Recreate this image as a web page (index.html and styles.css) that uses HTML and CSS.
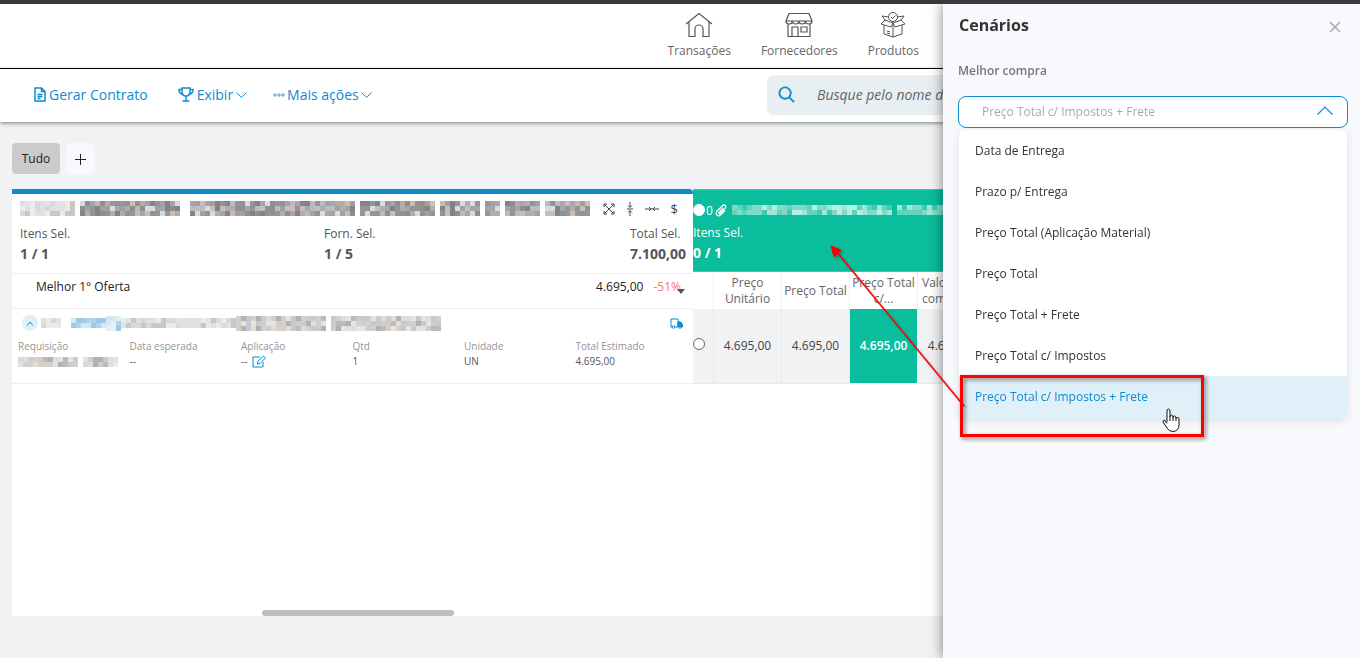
FILE: index.html
```html
<!DOCTYPE html>
<html lang="pt-BR">
<head>
<meta charset="utf-8">
<title>Cenários</title>
<link rel="stylesheet" href="styles.css">
</head>
<body>
<div class="page">
  <header class="topbar">
    <nav class="main-nav">
      <a href="#" class="nav-item">
        <svg width="28" height="26" viewBox="0 0 28 26" class="line-icon"><path d="M1 12 14 1.500 27 12M4 10v14.500h6V17a4 4 0 0 1 8 0v7.500h6V10"/></svg>
        <span>Transações</span>
      </a>
      <a href="#" class="nav-item">
        <svg width="28" height="26" viewBox="0 0 28 26" class="line-icon"><path d="M4 1.500h20l3 7.500H1zM1 9q0 3 3.200 3t3.300-3q0 3 3.200 3t3.300-3q0 3 3.200 3t3.300-3q0 3 3.200 3T27 9M3 12v12.500h22V12M7 24V15h6v9.500M16 15h6v5h-6z"/></svg>
        <span>Fornecedores</span>
      </a>
      <a href="#" class="nav-item">
        <svg width="26" height="26" viewBox="0 0 26 26" class="line-icon thin"><circle cx="13" cy="5" r="4.500"/><path d="m11 5 1.500 1.500 3-3M9 5 2 4l3 4-4 4 10 3 2-4 2 4 10-3-4-4 3-4-7 1M5 8l8 3 8-3M4 13v9l9 3 9-3v-9M13 11v14M7 19l3 1M7 21l3 1"/></svg>
        <span>Produtos</span>
      </a>
    </nav>
  </header>

  <div class="toolbar">
    <button class="tool tool-contract">
      <svg width="12" height="15" viewBox="0 0 12 15"><path d="M1 1h6.500L11 4.500V14H1zM7.500 1v3.500H11M3.500 7.500h5M3.500 9.500h5M3.500 11.500h3"/></svg>
      Gerar Contrato
    </button>
    <button class="tool tool-show">
      <svg width="16" height="15" viewBox="0 0 16 15"><path d="M4 1h8v3.500Q12 9 8 9T4 4.500zM4 2.500H1Q1 7 5.500 7.500M12 2.500h3Q15 7 10.500 7.500M8 9v4.500M4.500 14h7"/></svg>
      Exibir
      <svg class="chev" width="11" height="6" viewBox="0 0 11 6"><path d="m0.500 0.500 5 5 5-5"/></svg>
    </button>
    <button class="tool tool-more">
      <svg class="chev dots" width="12" height="4" viewBox="0 0 12 4"><circle cx="2" cy="2" r="1.200"/><circle cx="6" cy="2" r="1.200"/><circle cx="10" cy="2" r="1.200"/></svg>
      Mais ações
      <svg class="chev" width="11" height="6" viewBox="0 0 11 6"><path d="m0.500 0.500 5 5 5-5"/></svg>
    </button>
    <label class="search">
      <svg width="17" height="17" viewBox="0 0 18 18"><circle cx="7.500" cy="7.500" r="6"/><path d="m12 12 5 5"/></svg>
      <input type="text" aria-label="Busca" placeholder="Busque pelo nome do">
    </label>
  </div>

  <main class="content">
    <div class="tabs">
      <button class="tab tab-active">Tudo</button>
      <button class="tab tab-add" aria-label="Adicionar"><svg width="11" height="11" viewBox="0 0 11 11"><path d="M5.500 0v11M0 5.500h11"/></svg></button>
    </div>

    <div class="board">
      <section class="items">
        <div class="summary">
          <div class="title-row">
            <div class="mosaic" data-rows="3" data-runs="l11 g1 d20 g2 d33 g1 d15 g1 d8 g1 d3 g1 d7 g1 d9"></div>
            <div class="title-actions">
              <button class="ico" aria-label="Expandir"><svg width="12" height="12" viewBox="0 0 12 12"><path d="m1 1 10 10M11 1 1 11M1 4V1h3M8 1h3v3M11 8v3H8M4 11H1V8"/></svg></button>
              <button class="ico" aria-label="Comprimir linhas"><svg width="6" height="14" viewBox="0 0 6 14"><path d="M3 0v5M3 9v5M0 7h6M1 3.500l2 2 2-2M1 10.500l2-2 2 2"/></svg></button>
              <button class="ico" aria-label="Comprimir colunas"><svg width="14" height="6" viewBox="0 0 14 6"><path d="M0 3h5M9 3h5M4 1l2 2-2 2M10 1 8 3l2 2M5 3h4"/></svg></button>
              <button class="ico dollar">$</button>
            </div>
          </div>
          <dl class="totals">
            <div><dt>Itens Sel.</dt><dd>1 / 1</dd></div>
            <div><dt>Forn. Sel.</dt><dd>1 / 5</dd></div>
            <div class="totals-last"><dt>Total Sel.</dt><dd>7.100,00</dd></div>
          </dl>
        </div>
        <div class="offer">
          <span>Melhor 1° Oferta</span>
          <span class="offer-value">4.695,00</span>
          <span class="offer-diff">-51%</span>
          <svg class="caret" width="8" height="5" viewBox="0 0 8 5"><path d="M0 0h8L4 5z"/></svg>
        </div>
        <article class="item">
          <div class="item-head">
            <button class="collapse" aria-label="Recolher"><svg width="8" height="5" viewBox="0 0 8 5"><path d="M1 4.500 4 1l3 3.500"/></svg></button>
            <div class="mosaic-line">
              <div class="mosaic" data-rows="2" data-runs="l4 g2 b7"></div>
              <div class="mosaic" data-rows="3" data-runs="b3"></div>
              <div class="mosaic" data-rows="2" data-runs="l23"></div>
              <div class="mosaic" data-rows="3" data-runs="m18 g1 m22"></div>
            </div>
            <svg class="truck" width="13" height="11" viewBox="0 0 13 11"><path d="M2 9H1V1h7v8H5M8 4h2.500L12.500 6.500V9H11"/><path class="solid" d="M8 4h2.500l2 2.500V8.500H8z"/><circle cx="3.500" cy="9" r="1.300"/><circle cx="10" cy="9" r="1.300"/></svg>
          </div>
          <dl class="facts">
            <div><dt>Requisição</dt><dd><div class="mosaic" data-rows="2" data-runs="l1 m11 g1 l1 m5 l1"></div></dd></div>
            <div><dt>Data esperada</dt><dd>--</dd></div>
            <div><dt>Aplicação</dt><dd>-- <button class="edit" aria-label="Editar"><svg width="15" height="13" viewBox="0 0 15 13"><path d="M8 2H1v10h10V7M5.500 9l.5-3 5.500-5 2 2L8 8.500z"/></svg></button></dd></div>
            <div><dt>Qtd</dt><dd>1</dd></div>
            <div><dt>Unidade</dt><dd>UN</dd></div>
            <div><dt>Total Estimado</dt><dd>4.695,00</dd></div>
          </dl>
        </article>
      </section>

      <section class="supplier">
        <div class="supplier-head">
          <div class="supplier-name">
            <input type="radio" class="radio" name="supplier" aria-label="Fornecedor">
            <span>0</span>
            <svg class="clip" width="12" height="13" viewBox="0 0 12 13"><path d="M8 4 4 8.500q-.5 1.500 1 1L10.500 4Q11.500 1 8.500 1L2 7q-2 3 .5 4.500 1.500 1 3-.5L10 6.500"/></svg>
            <div class="mosaic" data-rows="2" data-runs="n32 g1 n16"></div>
          </div>
          <div class="supplier-label">Itens Sel.</div>
          <div class="supplier-count">0 / 1</div>
        </div>
        <table class="prices">
          <thead><tr><th class="pick"></th><th>Preço Unitário</th><th>Preço Total</th><th>Preço Total c/...</th><th>Valor s/ comissão</th></tr></thead>
          <tbody><tr><td class="pick"><input type="radio" class="radio" name="offer" aria-label="Oferta"></td><td>4.695,00</td><td>4.695,00</td><td class="best">4.695,00</td><td>4.695,00</td></tr></tbody>
        </table>
      </section>
      <div class="scroll-thumb"></div>
    </div>
  </main>
</div>

<aside class="drawer">
  <div class="drawer-head">
    <h2>Cenários</h2>
    <button class="close" aria-label="Fechar"><svg width="12" height="12" viewBox="0 0 12 12"><path d="m1 1 10 10M11 1 1 11"/></svg></button>
  </div>
  <label class="field-label" for="best">Melhor compra</label>
  <div class="field">
    <select id="best"><option>Preço Total c/ Impostos + Frete</option></select>
    <svg class="field-arrow" width="16" height="9" viewBox="0 0 16 9"><path d="m0.500 8.500 7.500-7.500 7.500 7.500"/></svg>
  </div>
  <div class="options">
    <button>Data de Entrega</button>
    <button>Prazo p/ Entrega</button>
    <button>Preço Total (Aplicação Material)</button>
    <button>Preço Total</button>
    <button>Preço Total + Frete</button>
    <button>Preço Total c/ Impostos</button>
    <button class="selected">Preço Total c/ Impostos + Frete</button>
  </div>
</aside>

<svg class="arrow" width="144" height="172" viewBox="0 0 144 172"><path class="shaft" d="M137 164 9 9"/><path class="tip" d="m4 4 3 11 2.500-2.500 3-2.500L14 8z"/></svg>
<div class="callout"></div>
<svg class="pointer" width="20" height="25" viewBox="0 0 20 25"><path d="M6 14V3q0-2 1.500-2T9 3v6q0-2 1.500-2T12 9v1q0-2 1.500-2T15 10v1q0-1.500 1.500-1.500T18 11v6q0 6-6 6.500-4 0-6-3.500l-4-6q0-2 1.500-2L6 15.500M9 9v4M12 10v3M15 11v2"/></svg>
<script src="mosaic.js"></script>
</body>
</html>
```
FILE: styles.css
```css
* { box-sizing: border-box; }
body { margin: 0; font-family: "Open Sans", "Noto Sans", sans-serif; font-size: 12px; color: #555; background: #f1f2f4; overflow: hidden; }
button { font: inherit; color: inherit; border: 0; background: none; padding: 0; margin: 0; cursor: pointer; }
svg { display: block; flex: none; fill: none; stroke: currentColor; }
dl, dd, h2 { margin: 0; }

.page { height: 100vh; display: flex; flex-direction: column; border-top: 4px solid #38383d; }

.topbar { background: #fff; border-bottom: 1px solid #000; height: 65px; flex: none; }
.main-nav { display: flex; justify-content: flex-end; gap: 30px; padding: 8px 441px 0 0; }
.nav-item { display: flex; flex-direction: column; align-items: center; gap: 4px; color: #666; text-decoration: none; line-height: 18px; }
.line-icon { stroke-width: 1.2; color: #555; }
.line-icon.thin { stroke-width: 1; }

.toolbar { position: relative; display: flex; align-items: center; height: 53px; flex: none; padding: 0 33px 2px 34px; background: #fff; box-shadow: 0 1px 4px rgba(0,0,0,.5); }
.tool { display: flex; align-items: center; gap: 3px; color: #0f8ccc; font-size: 14px; line-height: 20px; }
.tool svg { stroke-width: 1.5; }
.tool .chev { stroke-width: 1; }
.tool .dots { stroke-width: 0.8; }
.tool-contract { margin-right: 30px; }
.tool-show { margin-right: 26px; }
.tool-more { gap: 2px; }
.search { display: flex; align-items: center; gap: 20px; margin-left: auto; width: 560px; height: 40px; padding-left: 11px; border-radius: 7px; background: #e8eff3; color: #0f8ccc; }
.search svg { stroke-width: 2; }
.search input { flex: 1; min-width: 0; border: 0; outline: 0; background: none; font: italic 14px "Open Sans", sans-serif; color: #555; }
.search input::placeholder { color: #666; opacity: 1; }

.content { flex: 1; display: flex; flex-direction: column; padding: 21px 12px 42px; min-height: 0; }
.tabs { display: flex; gap: 6px; align-items: flex-start; margin-bottom: 14px; }
.tab { height: 32px; border-radius: 4px; font-size: 12px; font-weight: 500; color: #222; }
.tab-active { background: #cbcbcb; width: 48px; height: 31px; }
.tab-add { background: #f8f9fc; width: 29px; border-radius: 7px; display: grid; place-items: center; }
.board { position: relative; flex: 1; display: flex; background: #fff; min-height: 0; overflow: hidden; }
.scroll-thumb { position: absolute; left: 250px; bottom: 0; width: 192px; height: 6px; border-radius: 3px; background: #bfbfbd; }

.items { width: 681px; flex: none; }
.summary { border-top: 5px solid #0a8ccf; border-top-right-radius: 4px; padding: 7px 7px 0 8px; height: 85px; border-bottom: 1px solid #eceef0; }
.title-row { display: flex; justify-content: space-between; height: 23px; }
.title-actions { display: flex; align-items: center; gap: 12px; height: 16px; padding-right: 8px; color: #444; }
.ico { line-height: 16px; }
.dollar { font-size: 13px; }
.totals { display: flex; justify-content: space-between; font-size: 12px; line-height: 20px; }
.totals > div { width: 304px; }
.totals > .totals-last { width: auto; margin-left: auto; }
.totals dd { font-weight: 700; font-size: 14px; color: #555; }
.offer { display: flex; align-items: center; height: 35px; padding: 0 8px 10px 24px; color: #222; border-bottom: 1px solid #eceef0; }
.offer-value { margin-left: auto; }
.offer-diff { color: #ff7373; margin-left: 10px; }
.caret { fill: #555; stroke: none; align-self: flex-end; margin: 0 0 4px -4px; }
.item { height: 75px; padding: 6px 6px 0; border-bottom: 1px solid #eceef0; }
.item-head { display: flex; align-items: center; gap: 3px; height: 16px; padding: 0 4px; }
.mosaic-line { display: flex; align-items: center; }
.collapse { width: 16px; height: 16px; border-radius: 50%; background: #e0f0f9; color: #0a8ccf; display: grid; place-items: center; }
.truck { margin-left: auto; color: #0a8ccf; }
.truck .solid { fill: currentColor; }
.facts { display: grid; grid-template-columns: repeat(6, 1fr); padding-top: 8px; font-size: 10px; line-height: 15px; }
.facts dt { color: #949494; }
.facts dd { display: flex; align-items: center; gap: 5px; height: 15px; }
.edit { color: #0a8ccf; }

.supplier { flex: 1; min-width: 0; }
.supplier-head { height: 83px; padding-top: 12px; background: #0abd9c; color: #fff; border-top: 1px solid #7fa79e; border-bottom: 1px solid #7fa79e; }
.supplier-name { display: flex; align-items: center; gap: 1px; height: 16px; }
.supplier-name .mosaic { margin-left: 4px; }
.clip { margin-left: 1px; stroke-width: 1.3; }
.supplier-label { line-height: 20px; margin-top: 5px; }
.supplier-count { font-size: 14px; font-weight: 700; line-height: 20px; }
.radio { appearance: none; width: 12px; height: 12px; margin: 0; border: 1px solid #666; border-radius: 50%; background: #fff; display: block; flex: none; }
.supplier-head .radio { border-color: #fff; }
.prices { border-collapse: separate; border-spacing: 0; table-layout: fixed; width: 293px; }
.prices th { width: 68px; height: 37px; padding: 0; font-weight: 400; line-height: 16px; color: #666; border-right: 1px solid #f0f1f3; }
.prices th:last-child { padding: 0 4px; text-align: left; overflow: hidden; }
.prices td { height: 75px; padding: 0 0 1px; text-align: center; background: #f1f2f4; border-right: 1px solid #e9eaec; border-bottom: 1px solid #e9eaec; color: #444; }
.prices .pick { width: 21px; padding-bottom: 5px; }
.prices .best { background: #0abd9c; color: #fff; font-weight: 600; border-color: #f1f2f4; }

.drawer { position: fixed; top: 4px; right: 0; bottom: 0; width: 417px; padding: 9px 12px 0 15px; background: #f8f9fc; box-shadow: 0 0 12px rgba(0,0,0,.5); clip-path: inset(0 0 0 -24px); }
.drawer-head { display: flex; justify-content: space-between; align-items: center; height: 24px; padding-right: 7px; margin-bottom: 25px; }
.drawer h2 { font-size: 16px; font-weight: 700; color: #333; padding-left: 1px; }
.close { color: #aaa; padding-top: 3px; }
.close svg { stroke-width: 1.5; }
.field-label { display: block; font-weight: 600; line-height: 18px; color: #777; margin-bottom: 16px; }
.field { position: relative; }
.field select { appearance: none; display: block; width: 100%; height: 32px; padding: 0 23px 2px; border: 1px solid #0a8ccf; border-radius: 8px; background: #fff; color: #aaa; font: 12px "Open Sans", sans-serif; }
.field-arrow { position: absolute; right: 15px; top: 10px; color: #0a8ccf; stroke-width: 1.2; }
.options { display: flex; flex-direction: column; margin: 2px 1px 0; border-radius: 6px; background: #fff; box-shadow: 0 2px 8px rgba(0,0,0,.1); overflow: hidden; }
.options button { text-align: left; height: 41px; padding: 0 16px; color: #333; }
.options .selected { background: #e0f0f9; color: #0a8ccf; height: 43px; padding-bottom: 2px; }

.mosaic svg { stroke: none; }

.arrow { position: fixed; left: 827px; top: 242px; filter: drop-shadow(2px 2px 1px rgba(0,0,0,.25)); }
.arrow .shaft { stroke: #f00; stroke-width: 1.5; }
.arrow .tip { fill: #f00; stroke: #f00; }
.callout { position: fixed; left: 960px; top: 375px; width: 244px; height: 62px; border: 3px solid #f00; filter: drop-shadow(2px 2px 2px rgba(0,0,0,.5)); pointer-events: none; }
.pointer { position: fixed; left: 1161px; top: 408px; fill: #fff; stroke: #111; }
```
FILE: mosaic.js
```js
// Fills each .mosaic with a strip of 5px blocks standing in for masked text.
const CELL = 5;
const TONES = {
  d: ['#9a9593', '#b3aca8', '#8f9498', '#a5a6ad', '#c9bdb4', '#918e8c', '#b4bcc6', '#868289', '#a3a19c', '#d5dde4'],
  m: ['#cfccc9', '#bcbabb', '#dedede', '#c4c9d2', '#d8d0c8', '#b4b2b1', '#e2e4e6'],
  l: ['#e4e2e0', '#d8d9db', '#cbc6c2', '#eeeae7', '#dde1e4'],
  b: ['#b0d3ee', '#9bcbe8', '#d5e7f4', '#c3d5ea', '#e3f0f7'],
  n: ['#7edcc8', '#a0e6d7', '#5fd3bb', '#b8ede2', '#86d6c6', '#3ccbb0']
};
let seed = 7;
function next(n) {
  seed = (seed * 16807) % 2147483647;
  return seed % n;
}
document.querySelectorAll('.mosaic').forEach(function (el) {
  const rows = Number(el.dataset.rows);
  let col = 0;
  let rects = '';
  el.dataset.runs.split(' ').forEach(function (run) {
    const tone = TONES[run[0]];
    const count = Number(run.slice(1));
    for (let i = 0; i < count; i++, col++) {
      if (!tone) continue;
      for (let r = 0; r < rows; r++) {
        rects += `<rect x="${col * CELL}" y="${r * CELL}" width="5" height="5" fill="${tone[next(tone.length)]}"/>`;
      }
    }
  });
  el.innerHTML = `<svg width="${col * CELL}" height="${rows * CELL}" shape-rendering="crispEdges">${rects}</svg>`;
});
```
